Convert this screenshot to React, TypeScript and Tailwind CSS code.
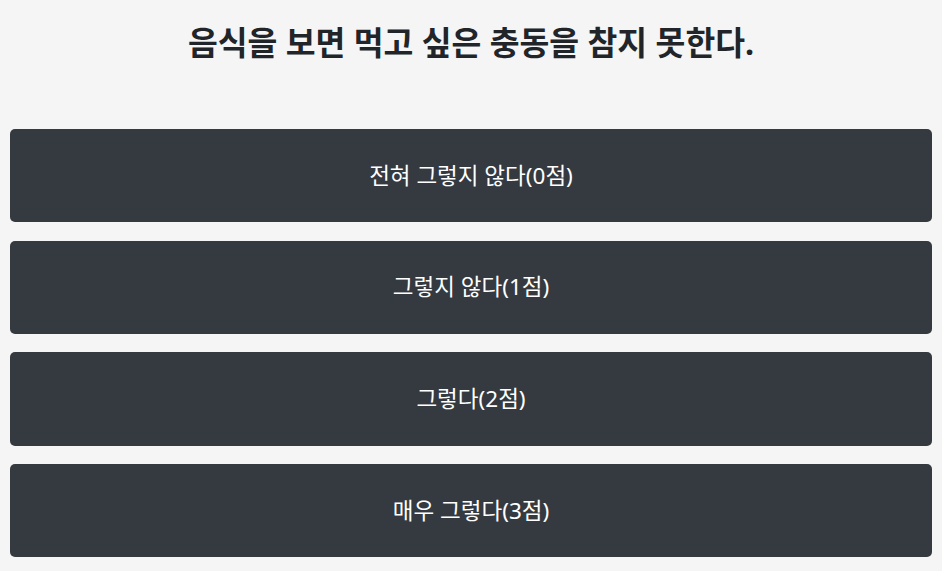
const options = ["전혀 그렇지 않다(0점)", "그렇지 않다(1점)", "그렇다(2점)", "매우 그렇다(3점)"];

export default function App() {
  return (
    <div
      className="min-h-screen bg-[#f5f5f5] px-[10px] pt-[23px]"
      style={{ fontFamily: '"Noto Sans", "Noto Sans CJK KR", sans-serif' }}
    >
      <h2 className="text-center text-[32.4px] font-bold leading-[38px] text-[#212529]">
        음식을 보면 먹고 싶은 충동을 참지 못한다.
      </h2>
      <div className="mt-[68px] flex flex-col gap-[18.4px]">
        {options.map((o) => (
          <button
            key={o}
            className="flex h-[93.3px] w-full items-center justify-center rounded-[5px] bg-[#343a40] text-[22.5px] text-white"
          >
            {o}
          </button>
        ))}
      </div>
    </div>
  );
}
